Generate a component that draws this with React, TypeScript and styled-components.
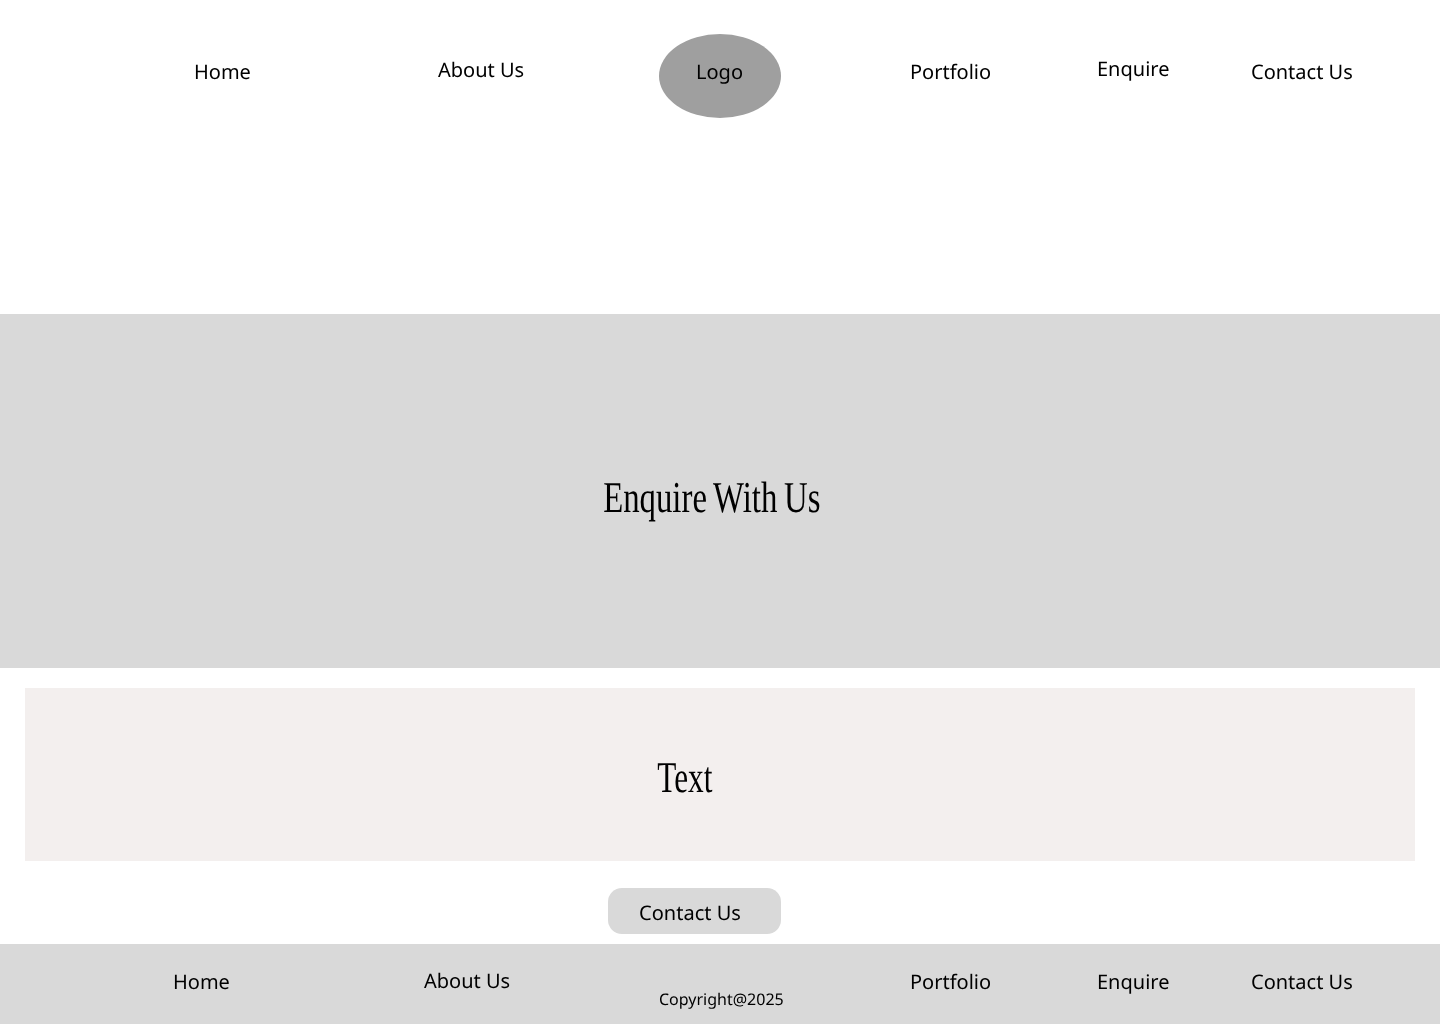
import React from "react";
import styled, { createGlobalStyle } from "styled-components";

const GlobalStyle = createGlobalStyle`
  html, body {
    margin: 0;
    padding: 0;
    background: #fff;
  }
  body {
    font-family: "Noto Sans", "Open Sans", sans-serif;
    color: #000;
    text-rendering: geometricPrecision;
  }
`;

const Page = styled.div`
  width: 1440px;
  height: 1024px;
  overflow: hidden;
  display: flex;
  flex-direction: column;
  will-change: transform;
`;

const Header = styled.header`
  height: 314px;
  box-sizing: border-box;
  padding: 34px 0 0 194px;
  display: grid;
  grid-template-columns: 244px 221px 251px 187px 154px 1fr;
  align-items: start;
`;

const NavLink = styled.a<{ $top: number }>`
  margin-top: ${({ $top }) => $top}px;
  font-size: 20px;
  line-height: 27px;
  white-space: nowrap;
`;

const Logo = styled.div`
  width: 122px;
  height: 84px;
  box-sizing: border-box;
  padding: 24px 1px 0 0;
  border-radius: 50%;
  background: #9f9f9f;
  font-size: 20px;
  line-height: 27px;
  text-align: center;
`;

const Hero = styled.section`
  height: 354px;
  box-sizing: border-box;
  padding: 152px 16px 0 0;
  background: #d9d9d9;
  display: flex;
  justify-content: center;
  align-items: flex-start;
`;

const DisplayText = styled.h1<{ $stretch: number }>`
  margin: 0;
  font-family: "Liberation Serif", serif;
  font-size: 44px;
  font-weight: 400;
  line-height: 64px;
  word-spacing: -2px;
  white-space: nowrap;
  transform: scaleX(${({ $stretch }) => $stretch});
`;

const TextPanel = styled.section`
  height: 173px;
  box-sizing: border-box;
  margin: 20px 25px 0;
  padding: 58px 71px 0 0;
  background: #f3efee;
  display: flex;
  justify-content: center;
  align-items: flex-start;
`;

const CtaRow = styled.div`
  height: 83px;
  box-sizing: border-box;
  padding: 27px 0 0 608px;
`;

const CtaButton = styled.button`
  width: 173px;
  height: 46px;
  box-sizing: border-box;
  padding: 3px 9px 0 0;
  border: 0;
  border-radius: 14px;
  background: #d9d9d9;
  color: #000;
  font-family: inherit;
  font-size: 20px;
  line-height: 27px;
  text-rendering: inherit;
`;

const Footer = styled.footer`
  height: 80px;
  box-sizing: border-box;
  padding: 24px 0 0 173px;
  background: #d9d9d9;
  display: grid;
  grid-template-columns: 251px 235px 251px 187px 154px 1fr;
  align-items: start;
`;

const Copyright = styled.div`
  margin-top: 20px;
  font-size: 16px;
  line-height: 22px;
  white-space: nowrap;
`;

export default function App() {
  return (
    <Page>
      <GlobalStyle />
      <Header>
        <NavLink $top={24}>Home</NavLink>
        <NavLink $top={22}>About Us</NavLink>
        <Logo>Logo</Logo>
        <NavLink $top={24}>Portfolio</NavLink>
        <NavLink $top={21}>Enquire</NavLink>
        <NavLink $top={24}>Contact Us</NavLink>
      </Header>
      <Hero>
        <DisplayText $stretch={0.745}>Enquire With Us</DisplayText>
      </Hero>
      <TextPanel>
        <DisplayText as="div" $stretch={0.71}>Text</DisplayText>
      </TextPanel>
      <CtaRow>
        <CtaButton>Contact Us</CtaButton>
      </CtaRow>
      <Footer>
        <NavLink $top={0}>Home</NavLink>
        <NavLink $top={-1}>About Us</NavLink>
        <Copyright>Copyright@2025</Copyright>
        <NavLink $top={0}>Portfolio</NavLink>
        <NavLink $top={0}>Enquire</NavLink>
        <NavLink $top={0}>Contact Us</NavLink>
      </Footer>
    </Page>
  );
}
